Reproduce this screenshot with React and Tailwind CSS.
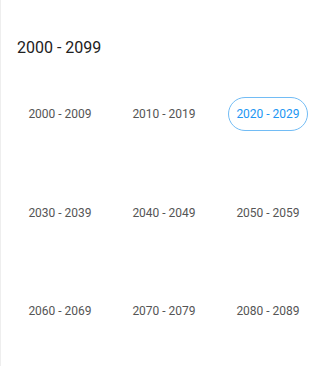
import React from 'react';

const decades = [
  '2000 - 2009',
  '2010 - 2019',
  '2020 - 2029',
  '2030 - 2039',
  '2040 - 2049',
  '2050 - 2059',
  '2060 - 2069',
  '2070 - 2079',
  '2080 - 2089',
];

const App = () => {
  const selected = '2020 - 2029';

  return (
    <div
      className="w-[314px] h-[366px] overflow-hidden bg-white border-l border-[#eeeeee]"
      style={{ fontFamily: 'Roboto, "Liberation Sans", sans-serif' }}
    >
      <div className="pt-[36px] pl-4 h-[65px] text-[16px] leading-6 text-[#212121]">2000 - 2099</div>
      <div className="grid grid-cols-[104px_104px_104px] pl-[7px]">
        {decades.map((d) => (
          <div key={d} className="h-[98.5px] flex items-center justify-center">
            <button
              type="button"
              className={
                d === selected
                  ? 'w-[80px] h-[34px] rounded-full border-[1.5px] border-[#72bcf5] text-[#2196f3] text-[12px]'
                  : 'w-[80px] h-[34px] rounded-full text-[#555555] text-[12px]'
              }
            >
              {d}
            </button>
          </div>
        ))}
      </div>
    </div>
  );
};

export default App;
